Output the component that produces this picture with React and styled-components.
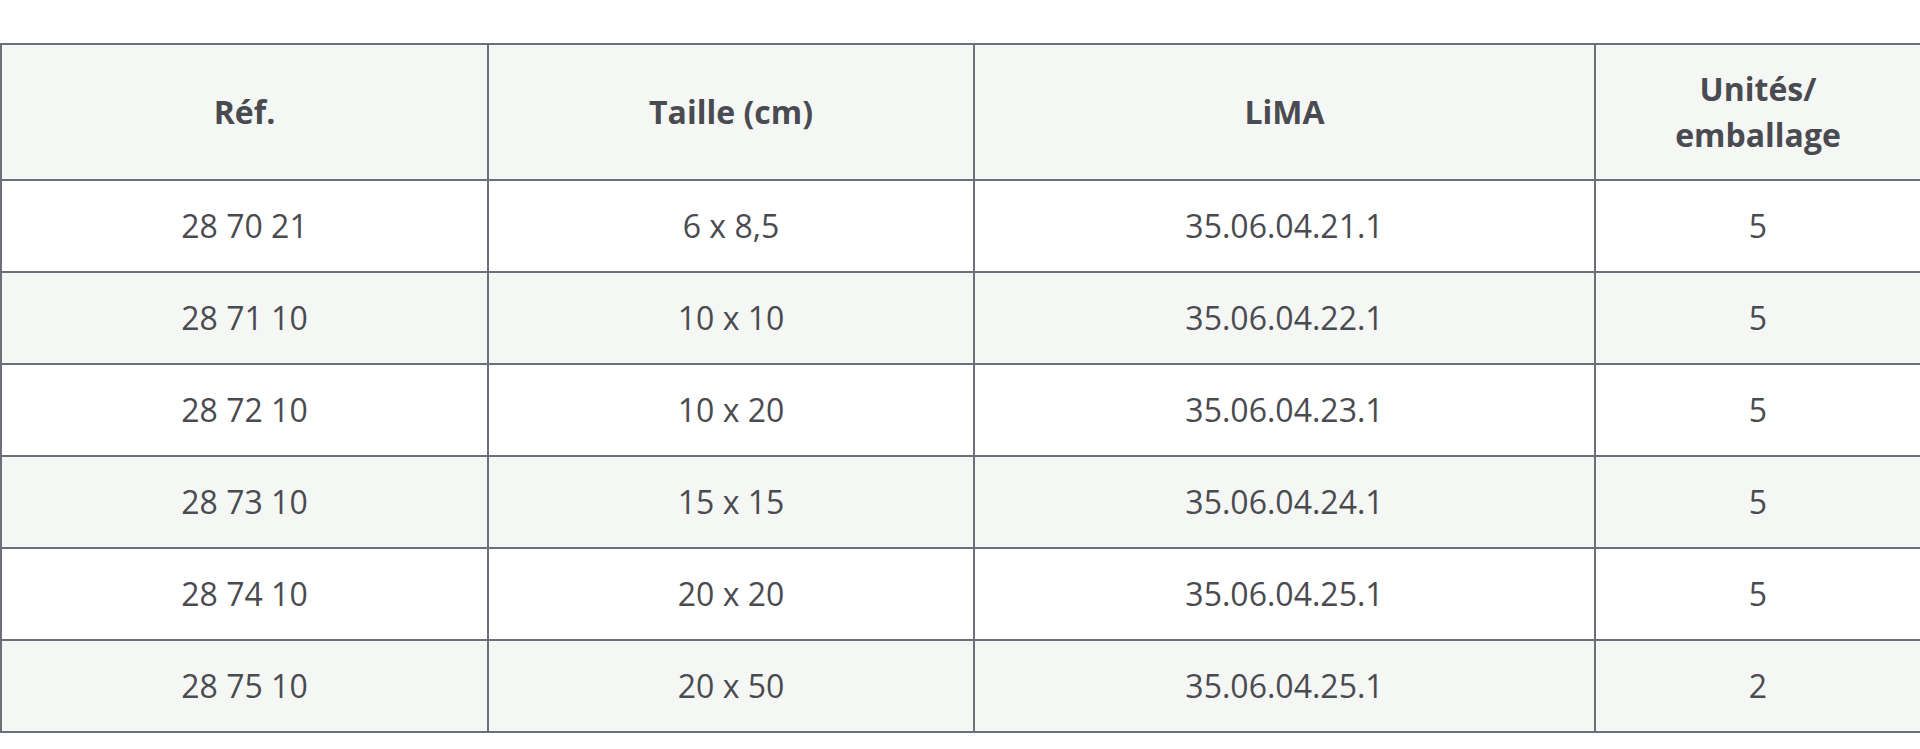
import React from 'react';
import styled, { createGlobalStyle } from 'styled-components';

const GlobalStyle = createGlobalStyle`
  html, body {
    margin: 0;
    padding: 0;
    background: #ffffff;
  }
  body {
    font-family: "Open Sans", "Liberation Sans", sans-serif;
  }
`;

const Page = styled.div`
  padding-top: 43px;
`;

const Table = styled.table`
  width: 100%;
  table-layout: fixed;
  border-collapse: collapse;
  color: #4a4b50;
  font-size: 32px;
  line-height: 46px;
`;

const HeadCell = styled.th`
  border: 2px solid #6c6e78;
  background: #f5f7f5;
  font-weight: 700;
  text-align: center;
  padding: 21px 20px;
`;

const Row = styled.tr`
  background: ${(p) => (p.$shaded ? '#f5f7f5' : '#ffffff')};
`;

const Cell = styled.td`
  border: 2px solid #6c6e78;
  text-align: center;
  font-weight: 400;
  padding: 22px 20px;
`;

const columns = [
  { label: 'Réf.', width: 487 },
  { label: 'Taille (cm)', width: 486 },
  { label: 'LiMA', width: 621 },
  { label: <>Unités/<br />emballage</>, width: 326 },
];

const rows = [
  ['28 70 21', '6 x 8,5', '35.06.04.21.1', '5'],
  ['28 71 10', '10 x 10', '35.06.04.22.1', '5'],
  ['28 72 10', '10 x 20', '35.06.04.23.1', '5'],
  ['28 73 10', '15 x 15', '35.06.04.24.1', '5'],
  ['28 74 10', '20 x 20', '35.06.04.25.1', '5'],
  ['28 75 10', '20 x 50', '35.06.04.25.1', '2'],
];

const App = () => (
  <>
    <GlobalStyle />
    <Page>
      <Table>
        <colgroup>
          {columns.map((c, i) => (
            <col key={i} style={{ width: `${c.width}px` }} />
          ))}
        </colgroup>
        <thead>
          <tr>
            {columns.map((c, i) => (
              <HeadCell key={i}>{c.label}</HeadCell>
            ))}
          </tr>
        </thead>
        <tbody>
          {rows.map((r, i) => (
            <Row key={i} $shaded={i % 2 === 1}>
              {r.map((v, j) => (
                <Cell key={j}>{v}</Cell>
              ))}
            </Row>
          ))}
        </tbody>
      </Table>
    </Page>
  </>
);

export default App;
